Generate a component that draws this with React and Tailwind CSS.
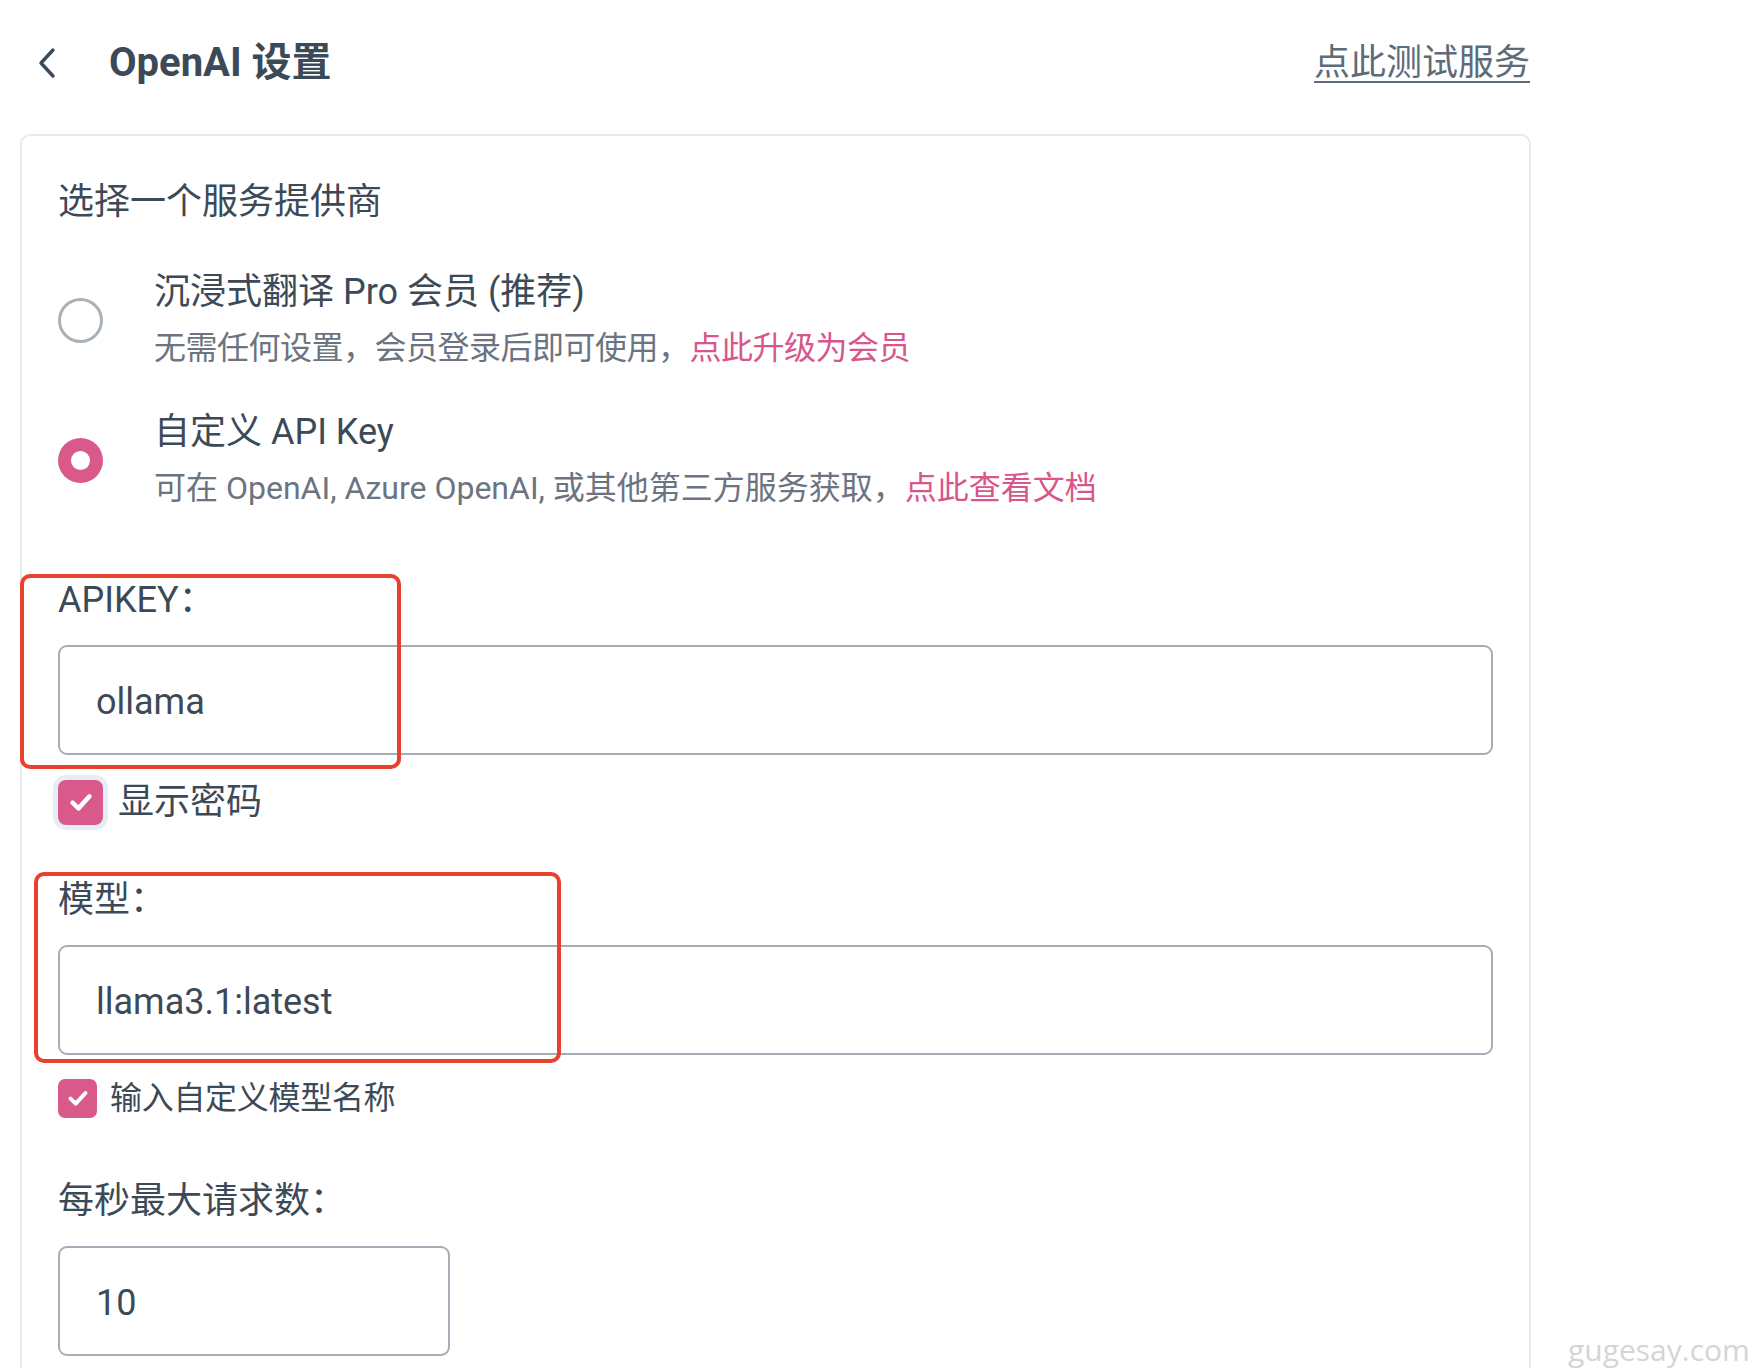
import React from "react";

function Check({ size }) {
  return (
    <svg width={size} height={size} viewBox="0 0 24 24" fill="none">
      <polyline points="6,12.5 10.2,16.5 18,8" stroke="white" strokeWidth="3.2" strokeLinecap="round" strokeLinejoin="round" />
    </svg>
  );
}

function Field({ label, value, width }) {
  return (
    <div>
      <div className="text-[36px] leading-[52px] text-[#3c4a57]">{label}</div>
      <input
        readOnly
        defaultValue={value}
        className={`mt-[19px] block h-[110px] ${width} rounded-[9px] border-2 border-[#a4aeb8] bg-white px-[36px] pt-[3px] text-[36px] text-[#3c4a57] outline-none`}
      />
    </div>
  );
}

export default function App() {
  return (
    <div className="relative h-[1368px] w-[1758px] overflow-hidden bg-white font-['Roboto','Noto_Sans_CJK_SC',sans-serif]">
      <div className="ml-[20px] w-[1511px]">
        {/* header */}
        <div className="flex h-[126px] items-center justify-between pl-[17px] pr-[1px]">
          <div className="flex items-center">
            <svg width="20" height="32" viewBox="0 0 20 32" fill="none">
              <polyline points="16,3 4,16 16,29" stroke="#3c4a57" strokeWidth="3.4" strokeLinecap="round" strokeLinejoin="round" />
            </svg>
            <div className="ml-[52px] text-[40px] font-bold leading-[52px] text-[#3c4a57]">OpenAI 设置</div>
          </div>
          <div className="text-[36px] leading-[52px] text-[#5d6b7a] underline decoration-2 underline-offset-[6px]">点此测试服务</div>
        </div>

        {/* card */}
        <div className="mt-[8px] h-[1400px] rounded-[10px] border-2 border-[#e8e9eb] px-[36px] pt-[40px]">
          <div className="text-[36px] leading-[52px] text-[#3c4a57]">选择一个服务提供商</div>

          <div className="mt-[38px] flex items-center">
            <div className="w-[96px]">
              <div className="h-[45px] w-[45px] rounded-full border-[3px] border-[#a9b1b9] bg-white" />
            </div>
            <div>
              <div className="text-[36px] leading-[52px] text-[#3c4a57]">沉浸式翻译 Pro 会员 (推荐)</div>
              <div className="mt-[4px] text-[32px] leading-[52px] tracking-[-0.5px] text-[#6b7480]">
                无需任何设置，会员登录后即可使用，<span className="text-[#d9568a]">点此升级为会员</span>
              </div>
            </div>
          </div>

          <div className="mt-[32px] flex items-center">
            <div className="w-[96px]">
              <div className="flex h-[45px] w-[45px] items-center justify-center rounded-full bg-[#d95a8a]">
                <div className="h-[19px] w-[19px] rounded-full bg-white" />
              </div>
            </div>
            <div>
              <div className="text-[36px] leading-[52px] text-[#3c4a57]">自定义 API Key</div>
              <div className="mt-[4px] text-[32px] leading-[52px] text-[#6b7480]">
                可在 OpenAI, Azure OpenAI, 或其他第三方服务获取，<span className="text-[#d9568a]">点此查看文档</span>
              </div>
            </div>
          </div>

          <div className="mt-[60px]">
            <Field label="APIKEY：" value="ollama" width="w-[1435px]" />
          </div>

          <div className="mt-[21px] flex h-[52px] items-center">
            <div className="flex h-[45px] w-[45px] items-center justify-center rounded-[8px] bg-[#d95a8a] ring-[5px] ring-[#e5edf6]">
              <Check size={34} />
            </div>
            <div className="ml-[15px] text-[36px] leading-[52px] text-[#3c4a57]">显示密码</div>
          </div>

          <div className="mt-[46px]">
            <Field label="模型：" value="llama3.1:latest" width="w-[1435px]" />
          </div>

          <div className="mt-[19px] flex h-[48px] items-center">
            <div className="flex h-[39px] w-[39px] items-center justify-center rounded-[7px] bg-[#d95a8a]">
              <Check size={30} />
            </div>
            <div className="ml-[13px] text-[32px] leading-[48px] tracking-[-0.3px] text-[#3c4a57]">输入自定义模型名称</div>
          </div>

          <div className="mt-[53px]">
            <Field label="每秒最大请求数：" value="10" width="w-[392px]" />
          </div>
        </div>
      </div>

      {/* annotation boxes */}
      <div className="pointer-events-none absolute left-[20px] top-[574px] h-[195px] w-[381px] rounded-[10px] border-[4px] border-[#e8412c]" />
      <div className="pointer-events-none absolute left-[34px] top-[872px] h-[191px] w-[527px] rounded-[10px] border-[4px] border-[#e8412c]" />

      {/* watermark */}
      <div className="absolute left-[1568px] top-[1335px] whitespace-nowrap font-['Open_Sans',sans-serif] text-[30px] leading-none text-[#d5d5d5]">gugesay.com</div>
    </div>
  );
}
